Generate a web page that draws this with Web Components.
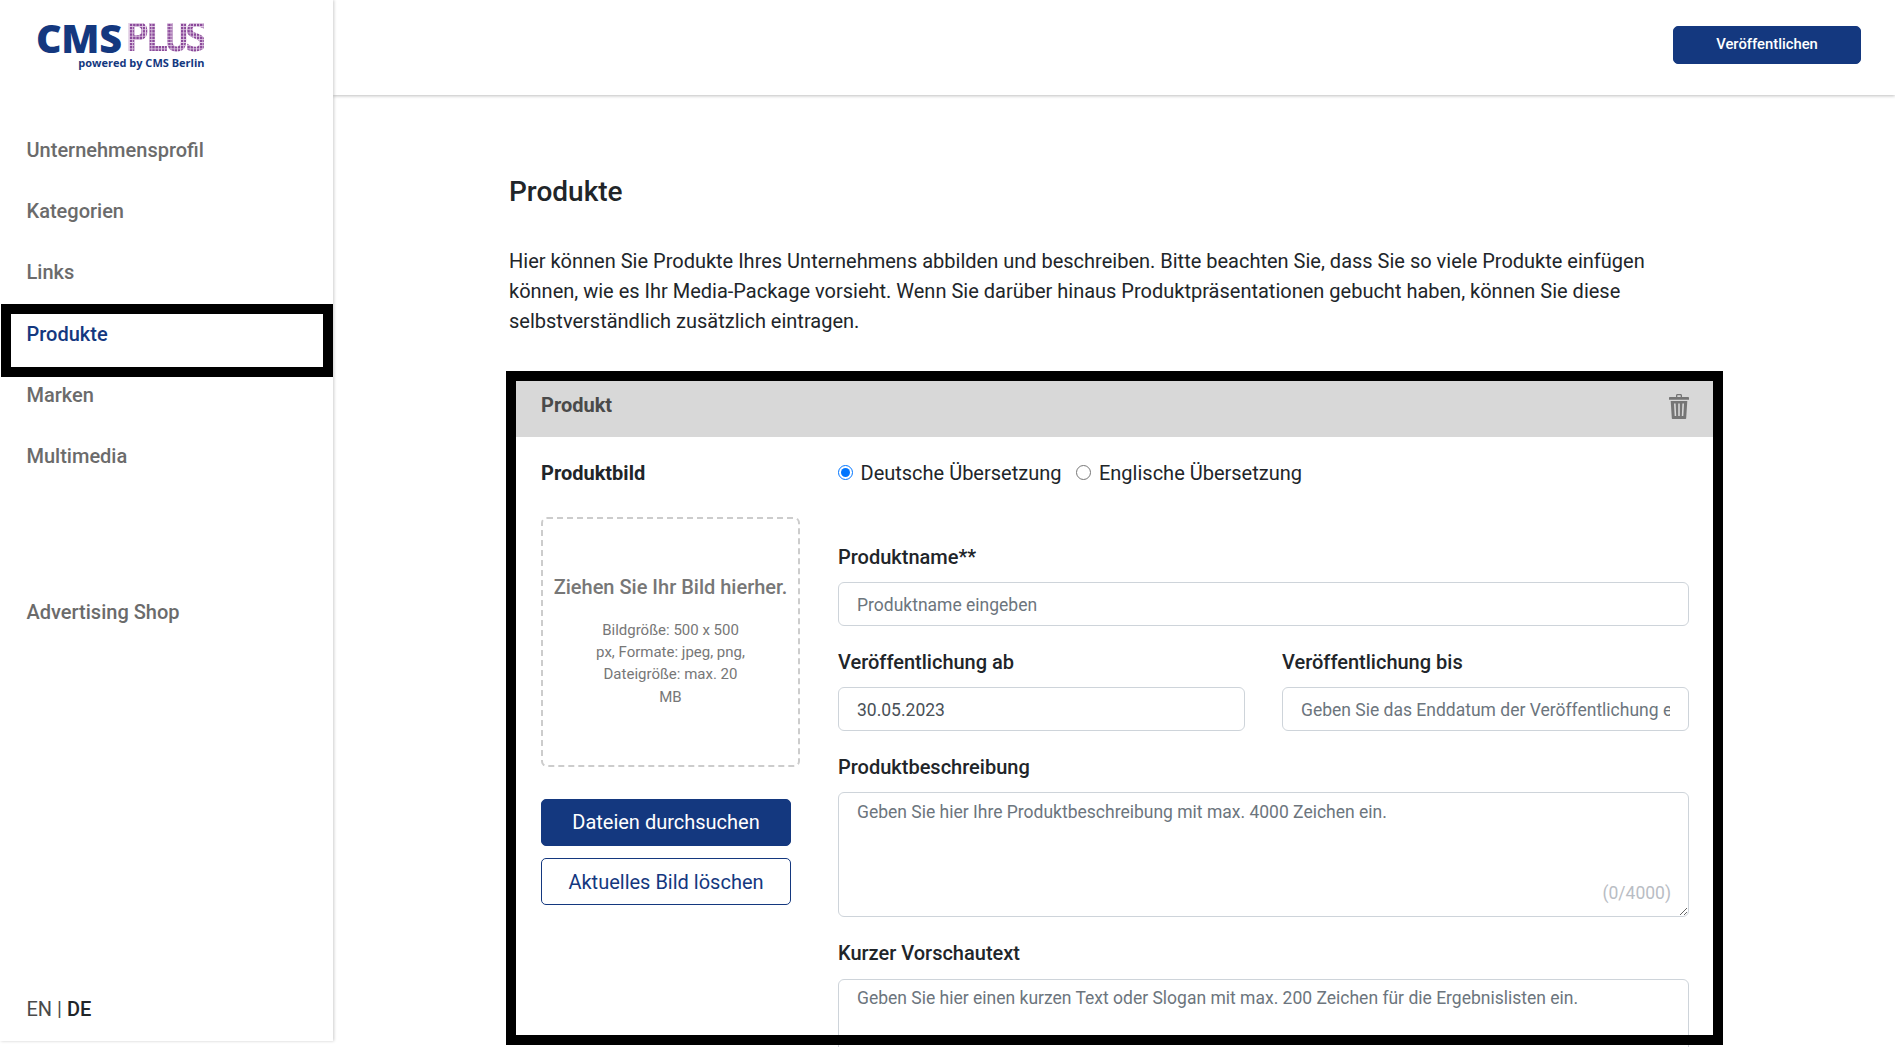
<!DOCTYPE html>
<html lang="de">
<head>
<meta charset="utf-8">
<title>Produkte</title>
<style>
  html, body { margin: 0; height: 1047px; overflow: hidden; background: #fff; }
  body { font-family: Roboto, "Liberation Sans", sans-serif; }
</style>
</head>
<body>
<cms-app>
  <cms-sidebar slot="side">
    <nav-item>Unternehmensprofil</nav-item>
    <nav-item>Kategorien</nav-item>
    <nav-item>Links</nav-item>
    <nav-item active>Produkte</nav-item>
    <nav-item>Marken</nav-item>
    <nav-item>Multimedia</nav-item>
    <nav-item slot="shop">Advertising Shop</nav-item>
  </cms-sidebar>
  <cms-topbar slot="top"></cms-topbar>
  <product-card>
    <drop-zone slot="left"></drop-zone>
    <cms-button slot="left" variant="solid">Dateien durchsuchen</cms-button>
    <cms-button slot="left" variant="outline">Aktuelles Bild löschen</cms-button>

    <lang-switch></lang-switch>
    <form-field label="Produktname**" placeholder="Produktname eingeben"></form-field>
    <field-row>
      <form-field label="Veröffentlichung ab" value="30.05.2023"></form-field>
      <form-field label="Veröffentlichung bis" placeholder="Geben Sie das Enddatum der Veröffentlichung ein"></form-field>
    </field-row>
    <form-field label="Produktbeschreibung" multiline counter="(0/4000)" placeholder="Geben Sie hier Ihre Produktbeschreibung mit max. 4000 Zeichen ein."></form-field>
    <form-field style="--label-gap: 15px; --area-top: 6px" label="Kurzer Vorschautext" multiline placeholder="Geben Sie hier einen kurzen Text oder Slogan mit max. 200 Zeichen für die Ergebnislisten ein."></form-field>
  </product-card>
</cms-app>

<script>
// small helper, every component gets an open shadow root from a template string
function tpl(html) {
  const t = document.createElement('template');
  t.innerHTML = html;
  return t;
}

const appTemplate = tpl(`
<style>
  :host { display: flex; height: 1047px; overflow: hidden; color: #212529; }
  .main { flex: 1; min-width: 0; display: flex; flex-direction: column; }
  .content { flex: 1; min-height: 0; padding: 0 182px 0 176px; }
  h1 { margin: 0; padding-top: 79px; font-size: 28px; line-height: 36px; font-weight: 500; color: #212529; }
  p { margin: 36px 0 0; width: 1170px; font-size: 20px; line-height: 30.200px; color: #212529; }
  .cards { margin: 44px 0 0 7px; }
</style>
<slot name="side"></slot>
<div class="main">
  <slot name="top"></slot>
  <div class="content">
    <h1>Produkte</h1>
    <p>Hier können Sie Produkte Ihres Unternehmens abbilden und beschreiben. Bitte beachten Sie, dass Sie so viele Produkte einfügen können, wie es Ihr Media-Package vorsieht. Wenn Sie darüber hinaus Produktpräsentationen gebucht haben, können Sie diese selbstverständlich zusätzlich eintragen.</p>
    <div class="cards"><slot></slot></div>
  </div>
</div>`);

class CmsApp extends HTMLElement {
  constructor() {
    super();
    this.attachShadow({ mode: 'open' }).appendChild(appTemplate.content.cloneNode(true));
  }
}

const sidebarTemplate = tpl(`
<style>
  :host { display: flex; flex-direction: column; flex: 0 0 333px; width: 333px; height: 1041px; box-sizing: border-box; background: #fff; box-shadow: 1px 0 3px rgba(0,0,0,.2); position: relative; z-index: 2; }
  .logo { height: 120px; padding: 23px 0 0 36px; box-sizing: border-box; }
  .shop { margin-top: 95px; }
  .lang { margin-top: auto; padding: 0 0 20px 26.500px; font-size: 20px; line-height: 24px; color: #4a4a4a; }
  .lang b { font-weight: 500; color: #212529; }
</style>
<div class="logo"><cms-logo></cms-logo></div>
<nav><slot></slot></nav>
<div class="shop"><slot name="shop"></slot></div>
<div class="lang">EN | <b>DE</b></div>`);

class CmsSidebar extends HTMLElement {
  constructor() {
    super();
    this.attachShadow({ mode: 'open' }).appendChild(sidebarTemplate.content.cloneNode(true));
  }
}

const logoTemplate = tpl(`
<style>
  :host { display: block; width: 170px; position: relative; height: 46px; }
  .line { display: flex; height: 30px; align-items: center; }
  .cms { font: 800 39.500px/30px "Open Sans", sans-serif; color: #14387f; letter-spacing: -.3px; }
  .plus { margin-left: 4px; width: 78px; font: 700 38.500px/30px "DejaVu Sans Mono", monospace; letter-spacing: -3.600px;
    color: transparent;
    background-color: #8b4a9a;
    background-image: linear-gradient(#e6d3e9 1px, transparent 1px), linear-gradient(90deg, #e6d3e9 1px, transparent 1px);
    background-size: 3.200px 3.200px;
    -webkit-background-clip: text; background-clip: text; }
  .sub { position: absolute; right: 1.500px; top: 33px; font: 700 11px/13px "Open Sans", sans-serif; color: #14387f; white-space: nowrap; }
</style>
<div class="line"><span class="cms">CMS</span><span class="plus">PLUS</span></div>
<div class="sub">powered by CMS Berlin</div>`);

class CmsLogo extends HTMLElement {
  constructor() {
    super();
    this.attachShadow({ mode: 'open' }).appendChild(logoTemplate.content.cloneNode(true));
  }
}

const navTemplate = tpl(`
<style>
  :host { display: block; position: relative; height: 61.200px; box-sizing: border-box; padding: 18px 0 0 26.500px; font-size: 20px; line-height: 24px; font-weight: 500; color: #6b6b6b; }
  :host([active]) { color: #14387f; }
</style>
<slot></slot>`);

class NavItem extends HTMLElement {
  constructor() {
    super();
    this.attachShadow({ mode: 'open' }).appendChild(navTemplate.content.cloneNode(true));
  }
  connectedCallback() {
    // the black frame sits over the active item
    if (this.hasAttribute('active')) {
      const frame = document.createElement('black-frame');
      frame.style.cssText = 'left:1px;right:0;top:.4px;height:73px';
      this.shadowRoot.appendChild(frame);
    }
  }
}

const frameTemplate = tpl(`
<style>
  :host { display: block; position: absolute; box-sizing: border-box; border: 10px solid #000; pointer-events: none; z-index: 5; }
</style>`);

class BlackFrame extends HTMLElement {
  constructor() {
    super();
    this.attachShadow({ mode: 'open' }).appendChild(frameTemplate.content.cloneNode(true));
  }
}

const topbarTemplate = tpl(`
<style>
  :host { display: flex; justify-content: flex-end; align-items: flex-start; flex: 0 0 95px; height: 95px; box-sizing: border-box; padding: 26px 34px 0 0; background: #fff; box-shadow: 0 1px 3px rgba(0,0,0,.25); position: relative; z-index: 1; }
</style>
<cms-button variant="small">Veröffentlichen</cms-button>`);

class CmsTopbar extends HTMLElement {
  constructor() {
    super();
    this.attachShadow({ mode: 'open' }).appendChild(topbarTemplate.content.cloneNode(true));
  }
}

const buttonTemplate = tpl(`
<style>
  :host { display: block; width: 250px; box-sizing: border-box; height: 47px; border: 1px solid #14387f; border-radius: 5px; text-align: center; font-size: 20px; line-height: 45px; margin-bottom: 12px; background: #14387f; color: #fff; }
  :host([variant="outline"]) { background: #fff; color: #14387f; line-height: 46px; }
  :host([variant="small"]) { width: 188px; height: 38px; line-height: 35px; font-size: 14.800px; font-weight: 500; margin: 0; }
</style>
<slot></slot>`);

class CmsButton extends HTMLElement {
  constructor() {
    super();
    this.attachShadow({ mode: 'open' }).appendChild(buttonTemplate.content.cloneNode(true));
  }
}

const cardTemplate = tpl(`
<style>
  :host { display: block; position: relative; }
  black-frame { left: -10px; right: -10px; top: -10px; height: 674px; }
  .head { display: flex; justify-content: space-between; height: 56px; box-sizing: border-box; padding: 0 24px 0 25px; background: #d8d8d8; font-size: 20px; line-height: 48px; font-weight: 700; color: #4a4a4a; }
  svg { display: block; width: 20px; height: 25px; margin-top: 13px; }
  .body { display: grid; grid-template-columns: 259px 1fr; column-gap: 38px; padding: 24px 24px 0 25px; }
  h3 { margin: 0 0 32px; font-size: 20px; line-height: 24px; font-weight: 700; color: #212529; }
</style>
<black-frame></black-frame>
<div class="head">
  <span>Produkt</span>
  <svg viewBox="0 0 20 25" aria-hidden="true">
    <path fill="#757575" d="M7 1.500C7 .7 7.600 0 8.400 0h3.200c.8 0 1.400.7 1.400 1.500V3h6c.6 0 1 .4 1 1v1.800H0V4c0-.6.4-1 1-1h6zM8.300 3h3.400V1.500a.3.3 0 0 0-.3-.3H8.600a.3.3 0 0 0-.3.3z"/>
    <path fill="#757575" fill-rule="evenodd" d="M1.700 7h16.600l-1.100 17c0 .6-.5 1-1 1H3.800c-.6 0-1-.4-1-1zM5 9.500l.7 12.500h1.500L6.600 9.500zm4.200 0V22h1.600V9.500zm4.200 0L12.800 22h1.500L15 9.500z"/>
  </svg>
</div>
<div class="body">
  <div>
    <h3>Produktbild</h3>
    <slot name="left"></slot>
  </div>
  <div><slot></slot></div>
</div>`);

class ProductCard extends HTMLElement {
  constructor() {
    super();
    this.attachShadow({ mode: 'open' }).appendChild(cardTemplate.content.cloneNode(true));
  }
}

const dropTemplate = tpl(`
<style>
  :host { display: flex; flex-direction: column; align-items: center; width: 259px; height: 250px; box-sizing: border-box; border: 2px dashed #ccc; border-radius: 6px; padding-top: 55px; margin-bottom: 32px; color: #777; text-align: center; }
  strong { font-size: 20px; line-height: 26px; font-weight: 500; white-space: nowrap; }
  span { width: 155px; margin-top: 19px; font-size: 15px; line-height: 22.400px; }
</style>
<strong>Ziehen Sie Ihr Bild hierher.</strong>
<span>Bildgröße: 500 x 500 px, Formate: jpeg, png, Dateigröße: max. 20 MB</span>`);

class DropZone extends HTMLElement {
  constructor() {
    super();
    this.attachShadow({ mode: 'open' }).appendChild(dropTemplate.content.cloneNode(true));
  }
}

const langTemplate = tpl(`
<style>
  :host { display: flex; align-items: center; height: 24px; margin-bottom: 59px; font-size: 20px; color: #212529; }
  label { display: flex; align-items: center; margin-right: 15px; }
  input { width: 15px; height: 15px; margin: 0 7.500px 0 0; accent-color: #0075ff; }
</style>
<label><input type="radio" name="lang" checked>Deutsche Übersetzung</label>
<label><input type="radio" name="lang">Englische Übersetzung</label>`);

class LangSwitch extends HTMLElement {
  constructor() {
    super();
    this.attachShadow({ mode: 'open' }).appendChild(langTemplate.content.cloneNode(true));
  }
}

const rowTemplate = tpl(`
<style>
  :host { display: grid; grid-template-columns: 1fr 1fr; column-gap: 37px; }
</style>
<slot></slot>`);

class FieldRow extends HTMLElement {
  constructor() {
    super();
    this.attachShadow({ mode: 'open' }).appendChild(rowTemplate.content.cloneNode(true));
  }
}

const fieldTemplate = tpl(`
<style>
  :host { display: block; position: relative; margin-bottom: 23px; }
  label { display: block; height: 24px; margin-bottom: var(--label-gap, 14px); font-size: 20px; line-height: 26px; font-weight: 500; color: #212529; }
  input, textarea { display: block; width: 100%; box-sizing: border-box; margin: 0; border: 1px solid #ced4da; border-radius: 6px; padding: 0 18px; font: 400 17.500px/24px Roboto, sans-serif; color: #495057; background: #fff; outline: none; }
  input { height: 44px; padding-top: 2px; }
  textarea { height: 125px; padding-top: var(--area-top, 7px); padding-bottom: 8px; resize: vertical; margin-bottom: 2px; }
  input::placeholder, textarea::placeholder { color: #6c757d; opacity: 1; }
  .count { position: absolute; right: 18px; bottom: 12px; font-size: 17.500px; line-height: 24px; color: #b9bdc4; }
</style>
<label></label>`);

class FormField extends HTMLElement {
  constructor() {
    super();
    this.attachShadow({ mode: 'open' }).appendChild(fieldTemplate.content.cloneNode(true));
  }
  connectedCallback() {
    const root = this.shadowRoot;
    root.querySelector('label').textContent = this.getAttribute('label');
    const control = document.createElement(this.hasAttribute('multiline') ? 'textarea' : 'input');
    control.placeholder = this.getAttribute('placeholder') || '';
    if (this.hasAttribute('value')) control.value = this.getAttribute('value');
    root.appendChild(control);
    if (this.hasAttribute('counter')) {
      const count = document.createElement('span');
      count.className = 'count';
      count.textContent = this.getAttribute('counter');
      root.appendChild(count);
    }
  }
}

customElements.define('black-frame', BlackFrame);
customElements.define('cms-logo', CmsLogo);
customElements.define('cms-button', CmsButton);
customElements.define('nav-item', NavItem);
customElements.define('cms-sidebar', CmsSidebar);
customElements.define('cms-topbar', CmsTopbar);
customElements.define('drop-zone', DropZone);
customElements.define('lang-switch', LangSwitch);
customElements.define('field-row', FieldRow);
customElements.define('form-field', FormField);
customElements.define('product-card', ProductCard);
customElements.define('cms-app', CmsApp);
</script>
</body>
</html>
